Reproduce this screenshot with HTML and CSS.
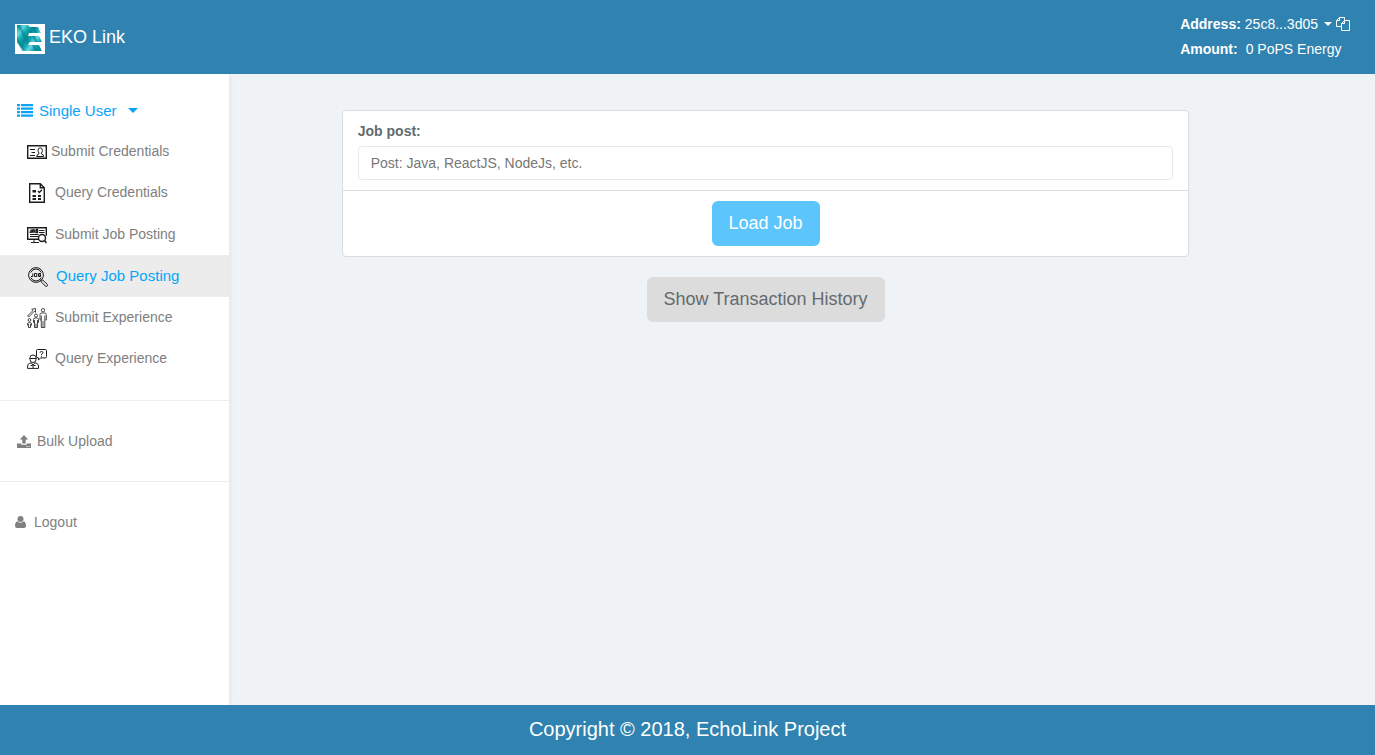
FILE: index.html
```html
<!DOCTYPE html>
<html lang="en">
<head>
    <meta charset="UTF-8">
    <meta name="viewport" content="width=device-width, initial-scale=1.0">
    <title>EKO Link</title>
    <link rel="stylesheet" href="styles.css">
</head>
<body>
    <header class="topbar">
        <a class="brand" href="#">
            <svg class="brand-logo" viewBox="0 0 30 30" aria-hidden="true">
                <defs>
                    <linearGradient id="weave" x1="0" y1="0" x2="7" y2="5" gradientUnits="userSpaceOnUse" spreadMethod="reflect">
                        <stop offset="0" stop-color="#068a9a"/>
                        <stop offset="0.5" stop-color="#14a9b4"/>
                        <stop offset="1" stop-color="#62d8dc"/>
                    </linearGradient>
                </defs>
                <rect width="30" height="30" fill="#fff"/>
                <path fill="url(#weave)" d="M2 1h11l2 2h8l3 6H14l-1 3h11l3 6H14l-1 3h11l3 6H9L2 18z"/>
                <path fill="#0a7f90" d="M2 1h3l10 17-2 3zM2 12l8 15H7l-5-9z" opacity=".55"/>
                <path fill="#0a7f90" d="M17 3h3l3 6h-3zM17 12h3l3 6h-3zM17 21h3l3 6h-3z" opacity=".6"/>
                <path fill="#fff" d="M2 20l4 7H2z"/>
            </svg>
            <span>EKO Link</span>
        </a>
        <div class="account">
            <div class="account-row">
                <strong>Address:</strong>
                <button class="address-toggle" type="button">25c8...3d05 <span class="caret"></span></button>
                <button class="copy" type="button" aria-label="Copy address">
                    <svg viewBox="0 0 14 14" aria-hidden="true">
                        <path d="M5.500 9.500h-5v-6l3-3h5v3M3.500.5v3h-3M5.500 6.500l3-3h5v10h-8zM8.500 3.500v3h-3"/>
                    </svg>
                </button>
            </div>
            <div class="account-row">
                <strong>Amount:</strong>
                <span class="amount">0 PoPS Energy</span>
            </div>
        </div>
    </header>

    <div class="layout">
        <nav class="sidebar">
            <button class="menu-toggle" type="button">
                <svg class="icon-list" viewBox="0 0 16 13" aria-hidden="true">
                    <path fill="currentColor" d="M0 0h3v2.300H0zM4 0h12v2.300H4zM0 3.500h3v2.300H0zM4 3.500h12v2.300H4zM0 7h3v2.300H0zM4 7h12v2.300H4zM0 10.500h3v2.300H0zM4 10.500h12v2.300H4z"/>
                </svg>
                <span>Single User</span>
                <span class="caret caret-menu"></span>
            </button>

            <ul class="submenu">
                <li>
                    <a class="close" href="#">
                        <svg class="icon" viewBox="0 0 20 20" aria-hidden="true">
                            <path class="line-bold" d="M.7 3.700h18.600v12.600H.7z"/>
                            <path class="line" d="M3 7.500h5M4.500 10.500h3.500M3 13.500h5"/>
                            <path class="line" d="M9.700 14.500q0-2 2.300-2.700V11q-1-1-1-2.700 0-2.500 2.200-2.500t2.200 2.500q0 1.700-1 2.700v.8q2.300.7 2.300 2.700z"/>
                        </svg>
                        Submit Credentials
                    </a>
                </li>
                <li>
                    <a href="#">
                        <svg class="icon" viewBox="0 0 20 20" aria-hidden="true">
                            <path class="line-bold" d="M2.700.7h10.600l4 4v14.600H2.700zM13.300.7v4h4"/>
                            <path class="solid" d="M5.500 7H9v2.500H5.500zM5.500 12H9v2H5.500zM5.500 15H9v2H5.500zM11 12h3v2h-3zM11 15h3v2h-3z"/>
                            <path class="line-bold" d="M11 8l1.300 1.400L15 6.700"/>
                        </svg>
                        Query Credentials
                    </a>
                </li>
                <li>
                    <a class="tall" href="#">
                        <svg class="icon" viewBox="0 0 20 20" aria-hidden="true">
                            <path class="line-bold" d="M12 14.300H.7V2.700h18.600v8"/>
                            <path class="line-bold" d="M4 4.500v2.800H2.500M5.500 5h1.700v2H5.500zM9 4.500v3h1.500v-3H9"/>
                            <path class="line" d="M12 5.500h5.500M12 7.500h5.500M3 9.500h8.500M3 11.500h8M7 14v3M4 17.500h8"/>
                            <circle class="line-bold white" cx="15" cy="13" r="3.500"/>
                            <path class="line-bold" d="M17.500 15.500l2 2.500"/>
                        </svg>
                        Submit Job Posting
                    </a>
                </li>
                <li>
                    <a class="tall active" href="#" aria-current="page">
                        <svg class="icon" viewBox="0 0 20 20" aria-hidden="true">
                            <circle class="line" cx="8" cy="8" r="7.400"/>
                            <path class="line" d="M2.800 5.500a5.600 5.600 0 0 1 10.400 0M2.800 10.500a5.600 5.600 0 0 0 10.400 0"/>
                            <path class="line" d="M4.800 6.500v3H3M6.500 6.500h2.300v3H6.500zM10.500 6.500v3h2v-3zM10.500 8h2"/>
                            <path class="line" d="M13 14.500l1.600-1.600 4.700 4.400q.8 1-.2 1.800t-1.800 0zM12.500 13l1.200 1"/>
                        </svg>
                        Query Job Posting
                    </a>
                </li>
                <li>
                    <a href="#">
                        <svg class="icon" viewBox="0 0 20 20" aria-hidden="true">
                            <path class="line-thin" d="M.5 8L6 2.500 4.700 1.300 8.500.5v3.800L7.200 3.300 1.800 9z"/>
                            <circle class="line-thin" cx="16" cy="2.200" r="1.700"/>
                            <circle class="line-thin" cx="9" cy="7.500" r="1.500"/>
                            <circle class="line-thin" cx="2.500" cy="12" r="1.400"/>
                            <path class="line-thin" d="M14 12h-1V6.500q0-1.500 1.500-1.500h3Q19.300 5 19.300 6.500V12h-1M14.300 7.500v12h3.500v-12M16 13v6"/>
                            <path class="line-thin" d="M7.500 14.500h-1v-3Q6.500 10 8 10h2q1.500 0 1.500 1.500v3h-1M7.500 12v7.500h3V12M9 15.500v4"/>
                            <path class="line-thin" d="M.5 17.500V16q0-1.300 1-1.300h2q1 0 1 1.300v1.500M1.500 16v3.500h2V16"/>
                        </svg>
                        Submit Experience
                    </a>
                </li>
                <li>
                    <a href="#">
                        <svg class="icon" viewBox="0 0 20 20" aria-hidden="true">
                            <path class="line" d="M10.500.5h7.800q1.200 0 1.200 1.200v6q0 1.200-1.200 1.200h-4.500l-2.300 2v-2q-2 0-2-1.200v-6Q9.500.5 10.500.5z"/>
                            <path class="line" d="M13 3.700q0-1.200 1.500-1.200T16 3.700q0 .8-1.500 1.300v.7M14.500 6.700v1"/>
                            <path class="line" d="M3 8.500Q3 6 6 6t3 2.500v2Q9 13.500 6 13.500t-3-3zM2.500 9.500h7"/>
                            <path class="line" d="M.6 19.400V17q0-2 2-2.600l1.500-.6L6 16l2-2.200 1.500.6q2 .6 2 2.600v2.400zM3.500 16.500h2M6.500 16.500h2M6 16v3"/>
                        </svg>
                        Query Experience
                    </a>
                </li>
            </ul>

            <a class="side-link" href="#">
                <svg class="icon-upload" viewBox="0 0 14 13" aria-hidden="true">
                    <path fill="currentColor" d="M7 0l4.200 4.500H8.700v4H5.300v-4H2.800zM0 8.500h4.300v1.200h5.400V8.500H14V13H0z"/>
                    <path fill="#fff" d="M9.500 11h1v1h-1zM11.500 11h1v1h-1z"/>
                </svg>
                Bulk Upload
            </a>
            <a class="side-link side-link-user" href="#">
                <svg class="icon-user" viewBox="0 0 11 12" aria-hidden="true">
                    <circle fill="currentColor" cx="5.500" cy="3" r="3"/>
                    <path fill="currentColor" d="M2.500 5.200Q5.500 8.500 8.500 5.200 11 5.800 11 10q0 2-2 2H2q-2 0-2-2 0-4.200 2.500-4.800z"/>
                </svg>
                Logout
            </a>
        </nav>

        <main class="content">
            <form class="card">
                <div class="card-head">
                    <label for="job-post">Job post:</label>
                    <input id="job-post" type="text" placeholder="Post: Java, ReactJS, NodeJs, etc.">
                </div>
                <div class="card-actions">
                    <button class="btn btn-load" type="button">Load Job</button>
                </div>
            </form>
            <button class="btn btn-history" type="button">Show Transaction History</button>
        </main>
    </div>

    <footer class="footer">Copyright © 2018, EchoLink Project</footer>
</body>
</html>
```
FILE: styles.css
```css
* {
    margin: 0;
    padding: 0;
    box-sizing: border-box;
}

body {
    display: flex;
    flex-direction: column;
    min-height: 100vh;
    background-color: #eff3f6;
    color: #636b6f;
    font-family: "Liberation Sans", Arial, sans-serif;
    font-size: 14px;
    line-height: 20px;
}

button,
input {
    font: inherit;
}

button {
    border: none;
    background: none;
    color: inherit;
    cursor: pointer;
}

a {
    color: inherit;
    text-decoration: none;
}

/* Header */
.topbar {
    display: flex;
    justify-content: space-between;
    padding: 11px 25px 13px 15px;
    background-color: #3083b0;
    color: #fff;
}

.brand {
    display: flex;
    align-items: center;
    gap: 4px;
    padding-top: 2px;
    font-size: 18px;
}

.brand-logo {
    width: 30px;
    height: 30px;
    margin-top: 4px;
}

.account-row {
    display: flex;
    align-items: center;
    gap: 4px;
    height: 25px;
}

.address-toggle {
    display: flex;
    align-items: center;
    gap: 6px;
}

.amount {
    margin-left: 4px;
}

.caret {
    border-top: 4px solid;
    border-left: 4px solid transparent;
    border-right: 4px solid transparent;
}

.copy {
    display: flex;
}

.copy svg {
    width: 14px;
    height: 14px;
    fill: none;
    stroke: currentColor;
}

/* Sidebar */
.layout {
    display: flex;
    flex: 1;
}

.sidebar {
    flex: none;
    width: 229px;
    padding-top: 16px;
    background-color: #fff;
    box-shadow: 0 0 6px rgba(0, 0, 0, 0.08);
    color: #808080;
    clip-path: inset(0 -10px 0 0);
}

.menu-toggle {
    display: flex;
    align-items: center;
    gap: 6px;
    width: 100%;
    height: 41px;
    padding-left: 17px;
    color: #08a4f7;
    font-size: 15px;
}

.icon-list {
    width: 16px;
    height: 13px;
}

.caret-menu {
    margin-left: 5px;
    border-width: 5px 5px 0;
}

.submenu {
    padding-bottom: 21px;
    border-bottom: 1px solid #ececec;
    list-style: none;
}

.submenu a {
    display: flex;
    align-items: center;
    gap: 8px;
    height: 41px;
    padding: 0 0 1px 27px;
}

.submenu a.close {
    gap: 4px;
}

.submenu a.tall {
    height: 42px;
    padding-bottom: 0;
}

.submenu a.active {
    padding-left: 28px;
    background-color: #ececec;
    color: #08a4f7;
    font-size: 15px;
}

.icon {
    width: 20px;
    height: 20px;
    margin-top: 2px;
    fill: none;
    stroke: #1c1c1c;
}

.line {
    stroke-width: 1;
}

.line-thin {
    stroke-width: 0.8;
}

.line-bold {
    stroke-width: 1.4;
}

.solid {
    fill: #1c1c1c;
    stroke: none;
}

.white {
    fill: #fff;
}

.side-link {
    display: flex;
    align-items: center;
    gap: 6px;
    height: 81px;
    padding-left: 17px;
    border-bottom: 1px solid #ececec;
}

.side-link-user {
    gap: 8px;
    height: 80px;
    padding-left: 15px;
    border-bottom: none;
}

.icon-upload {
    width: 14px;
    height: 13px;
}

.icon-user {
    width: 11px;
    height: 12px;
}

/* Content */
.content {
    flex: 1;
    padding: 36px 13.5% 20px 8.2%;
    text-align: center;
}

.card {
    margin-bottom: 20px;
    border: 1px solid #d9dbdc;
    border-radius: 4px;
    background-color: #fff;
}

.card-head {
    padding: 10px 15px;
    border-bottom: 1px solid #d9dbdc;
    text-align: left;
}

.card-head label {
    display: block;
    margin-bottom: 5px;
    font-weight: bold;
}

.card-head input {
    width: 100%;
    height: 34px;
    padding: 6px 12px;
    border: 1px solid #e9e9e9;
    border-radius: 4px;
    background-color: #fff;
}

.card-head input::placeholder {
    color: #777;
}

.card-actions {
    padding: 10px 15px;
}

.btn {
    height: 45px;
    padding: 0 17px 2px;
    border-radius: 6px;
    font-size: 18px;
    vertical-align: top;
}

.btn-load {
    background-color: #5bc5fc;
    color: #fff;
}

.btn-history {
    background-color: #dcdcdc;
}

/* Footer */
.footer {
    padding: 9px 15px 11px;
    background-color: #3083b0;
    color: #fff;
    font-size: 20px;
    line-height: 30px;
    text-align: center;
}
```
